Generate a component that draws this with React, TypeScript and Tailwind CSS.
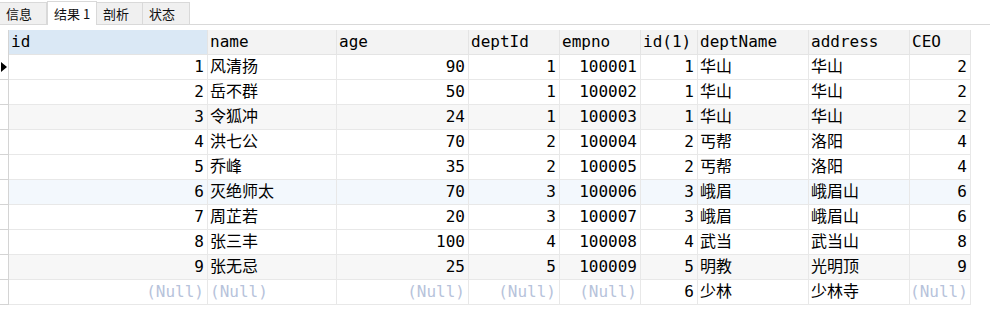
import React from "react";

const cols = ["id", "name", "age", "deptId", "empno", "id(1)", "deptName", "address", "CEO"];
const widths = "grid-cols-[9px_199px_129px_132px_91px_81px_57px_111px_101px_61px]";
// which columns are numeric (right aligned)
const numeric = [true, false, true, true, true, true, false, false, true];

const N = null;
const rows: (string | number | null)[][] = [
  [1, "风清扬", 90, 1, 100001, 1, "华山", "华山", 2],
  [2, "岳不群", 50, 1, 100002, 1, "华山", "华山", 2],
  [3, "令狐冲", 24, 1, 100003, 1, "华山", "华山", 2],
  [4, "洪七公", 70, 2, 100004, 2, "丐帮", "洛阳", 4],
  [5, "乔峰", 35, 2, 100005, 2, "丐帮", "洛阳", 4],
  [6, "灭绝师太", 70, 3, 100006, 3, "峨眉", "峨眉山", 6],
  [7, "周芷若", 20, 3, 100007, 3, "峨眉", "峨眉山", 6],
  [8, "张三丰", 100, 4, 100008, 4, "武当", "武当山", 8],
  [9, "张无忌", 25, 5, 100009, 5, "明教", "光明顶", 9],
  [N, N, N, N, N, 6, "少林", "少林寺", N],
];

const rowBg = (i: number) => {
  if (i === 2 || i === 8) return "bg-[#f7f7f7]";
  if (i === 5) return "bg-[#f3f8fd]";
  return "bg-white";
};

const tabs = [
  { label: "信息", w: "w-[47px]", active: false },
  { label: "结果 1", w: "w-[50px]", active: true },
  { label: "剖析", w: "w-[46px]", active: false },
  { label: "状态", w: "w-[47px]", active: false },
];

export default function App() {
  return (
    <div className="w-[990px] h-[316px] bg-white overflow-hidden">
      {/* tab strip */}
      <div className="flex items-end h-[25px] border-b border-[#d9d9d9]">
        {tabs.map((t) => (
          <div
            key={t.label}
            className={
              t.active
                ? `${t.w} h-[24px] -mb-px bg-white border-x border-t border-[#d9d9d9] flex items-center pl-[6px] text-[13px] text-[#111] [font-family:'Noto_Sans_CJK_SC',sans-serif]`
                : `${t.w} h-[22px] bg-[#f0f0f0] border-r border-t border-[#d9d9d9] flex items-center pl-[6px] text-[13px] text-[#111] [font-family:'Noto_Sans_CJK_SC',sans-serif]`
            }
          >
            {t.label}
          </div>
        ))}
      </div>

      {/* grid */}
      <div className="mt-[5px] w-[971px] [font-family:'DejaVu_Sans_Mono','Noto_Sans_CJK_SC',monospace] text-[16px] leading-[24px] text-[#000]">
        <div className={`grid ${widths} h-[25px]`}>
          <div className="border-r border-[#d4d4d4] bg-white" />
          {cols.map((c, i) => (
            <div
              key={c}
              className={`border-r border-b border-[#e4e4e4] pl-[2px] overflow-hidden whitespace-nowrap ${
                i === 0 ? "bg-[#dae8f5]" : "bg-[#f3f3f3]"
              }`}
            >
              {c}
            </div>
          ))}
        </div>
        {rows.map((r, ri) => (
          <div key={ri} className={`grid ${widths} h-[25px]`}>
            <div className="border-r border-b border-[#d4d4d4] bg-white flex items-center">
              {ri === 0 && (
                <svg width="7" height="10" viewBox="0 0 7 10" className="ml-[1px]">
                  <path d="M0 0 L6 5 L0 10 Z" fill="#000" />
                </svg>
              )}
            </div>
            {r.map((v, ci) => (
              <div
                key={ci}
                className={`border-r border-b border-[#e8e8e8] overflow-hidden whitespace-nowrap ${rowBg(ri)} ${
                  numeric[ci] ? "text-right pr-[3px]" : "pl-[2px]"
                } ${v === null ? "text-[#b7c3db]" : ""}`}
              >
                {v === null ? "(Null)" : v}
              </div>
            ))}
          </div>
        ))}
      </div>
    </div>
  );
}
